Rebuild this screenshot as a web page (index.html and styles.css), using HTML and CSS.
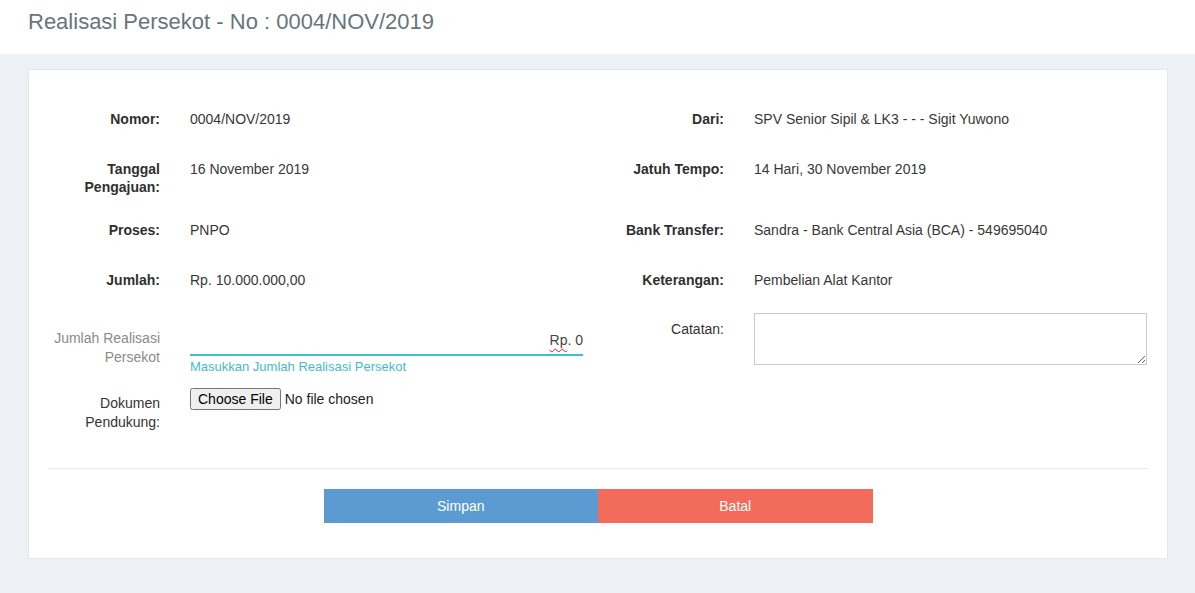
FILE: index.html
```html
<!DOCTYPE html>
<html lang="id">
<head>
<meta charset="utf-8">
<title>Realisasi Persekot</title>
<link rel="stylesheet" href="styles.css">
</head>
<body>
<header class="page-header">
  <h1 class="page-title">Realisasi Persekot - No : 0004/NOV/2019</h1>
</header>
<main class="page-body">
  <section class="card">
    <form class="form">
      <div class="fields">
        <div class="label">Nomor:</div>
        <div class="value">0004/NOV/2019</div>
        <div class="label">Dari:</div>
        <div class="value">SPV Senior Sipil &amp; LK3 - - - Sigit Yuwono</div>

        <div class="label">Tanggal Pengajuan:</div>
        <div class="value">16 November 2019</div>
        <div class="label">Jatuh Tempo:</div>
        <div class="value">14 Hari, 30 November 2019</div>

        <div class="label">Proses:</div>
        <div class="value">PNPO</div>
        <div class="label">Bank Transfer:</div>
        <div class="value">Sandra - Bank Central Asia (BCA) - 549695040</div>

        <div class="label">Jumlah:</div>
        <div class="value">Rp. 10.000.000,00</div>
        <div class="label">Keterangan:</div>
        <div class="value">Pembelian Alat Kantor</div>

        <label class="label label-muted" for="realisasi">Jumlah Realisasi Persekot</label>
        <div class="field">
          <div class="line-input" id="realisasi"><span class="misspelt">Rp</span>. 0</div>
          <div class="help">Masukkan Jumlah Realisasi Persekot</div>
        </div>
        <label class="label label-plain label-note" for="catatan">Catatan:</label>
        <div class="field">
          <textarea class="textarea" id="catatan"></textarea>
        </div>

        <label class="label label-plain label-doc" for="dokumen">Dokumen Pendukung:</label>
        <div class="field">
          <input class="file" type="file" id="dokumen">
        </div>
        <div></div>
        <div></div>
      </div>
      <hr class="divider">
      <div class="actions">
        <button type="button" class="btn btn-save">Simpan</button>
        <button type="button" class="btn btn-cancel">Batal</button>
      </div>
    </form>
  </section>
</main>
</body>
</html>
```
FILE: styles.css
```css
* { box-sizing: border-box; }
html, body {
  margin: 0;
  padding: 0;
}
body {
  font-family: "Liberation Sans", Arial, sans-serif;
  font-size: 14px;
  color: #333;
  background: #edf1f5;
  height: 593px;
  overflow: hidden;
}
.page-header {
  background: #fff;
  height: 54px;
  padding: 8px 28px 0;
}
.page-title {
  margin: 0;
  font-size: 22px;
  line-height: 27px;
  font-weight: normal;
  color: #67757c;
}
.page-body {
  padding: 15px 27px 0 28px;
}
.card {
  background: #fff;
  border: 1px solid #e3e8ed;
  padding: 33px 20px 35px;
}
.fields {
  display: grid;
  grid-template-columns: 111px 393px 111px 393px;
  column-gap: 30px;
  row-gap: 15px;
  align-items: start;
}
.label {
  text-align: right;
  font-weight: bold;
  color: #2f2f2f;
  line-height: 18px;
  padding: 7px 0 3px;
}
.value {
  min-height: 35px;
  padding-top: 7px;
  line-height: 18px;
  color: #383838;
}
.label-muted {
  font-weight: normal;
  color: #8a8a8a;
  line-height: 19px;
  padding-top: 15px;
}
.label-plain {
  font-weight: normal;
  color: #333;
  line-height: 19px;
}
.label-note { padding-top: 6px; }
.label-doc { padding-top: 4px; }
.field { display: flex; flex-direction: column; }
.line-input {
  margin-top: 16px;
  line-height: 20px;
  padding-bottom: 4px;
  border-bottom: 2px solid #3cc0d0;
  text-align: right;
  color: #444;
}
.misspelt {
  text-decoration: underline wavy #e02020;
  text-decoration-thickness: 1px;
  text-underline-offset: 3px;
}
.help {
  margin-top: 3px;
  font-size: 13px;
  line-height: 16px;
  color: #45bbcc;
}
.textarea {
  margin-top: -1px;
  width: 393px;
  height: 52px;
  border: 1px solid #c3cbd8;
  border-radius: 0;
  resize: vertical;
  font-family: inherit;
  font-size: 14px;
}
.file {
  margin-top: -2px;
  font-family: "Liberation Sans", Arial, sans-serif;
  font-size: 14px;
  color: #222;
}
.divider {
  border: 0;
  border-top: 1px solid #e6eaee;
  margin: 33px -1px 20px;
}
.actions {
  display: flex;
  width: 549px;
  margin: 0 auto;
}
.btn {
  flex: 1;
  height: 34px;
  border: 0;
  border-radius: 0;
  font-family: inherit;
  font-size: 14px;
  color: #fff;
  cursor: pointer;
}
.btn-save { background: #5b9bd1; }
.btn-cancel { background: #f36b5b; }
```
